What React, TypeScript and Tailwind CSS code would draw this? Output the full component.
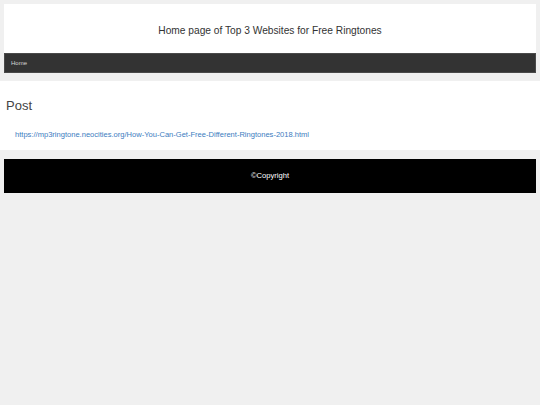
import React from "react";

export default function App() {
  return (
    <div
      className="min-h-[405px] w-full bg-[#f0f0f0] pt-[4px]"
      style={{ fontFamily: '"Liberation Sans", Arial, sans-serif' }}
    >
      <div className="mx-[4px] flex h-[49px] items-center justify-center bg-white pt-[5px] text-[10.2px] text-[#333]">
        Home page of Top 3 Websites for Free Ringtones
      </div>
      <nav className="mx-[4px] flex h-[20px] items-center border border-[#4a4a4a] bg-[#333] pl-[6px]">
        <a className="text-[6px] text-[#d8d8d8]">Home</a>
      </nav>
      <section className="mt-[8px] h-[69px] bg-white px-[6px] pt-[18px]">
        <h2 className="text-[13px] leading-none text-[#444]">Post</h2>
        <div className="mt-[19px] pl-[9px] text-[7.56px] leading-none">
          <a className="text-[#3b7cc0]">
            https://mp3ringtone.neocities.org/How-You-Can-Get-Free-Different-Ringtones-2018.html
          </a>
        </div>
      </section>
      <footer className="mx-[4px] mt-[9px] flex h-[34px] items-center justify-center bg-black text-[7.6px] text-white">
        ©Copyright
      </footer>
    </div>
  );
}
